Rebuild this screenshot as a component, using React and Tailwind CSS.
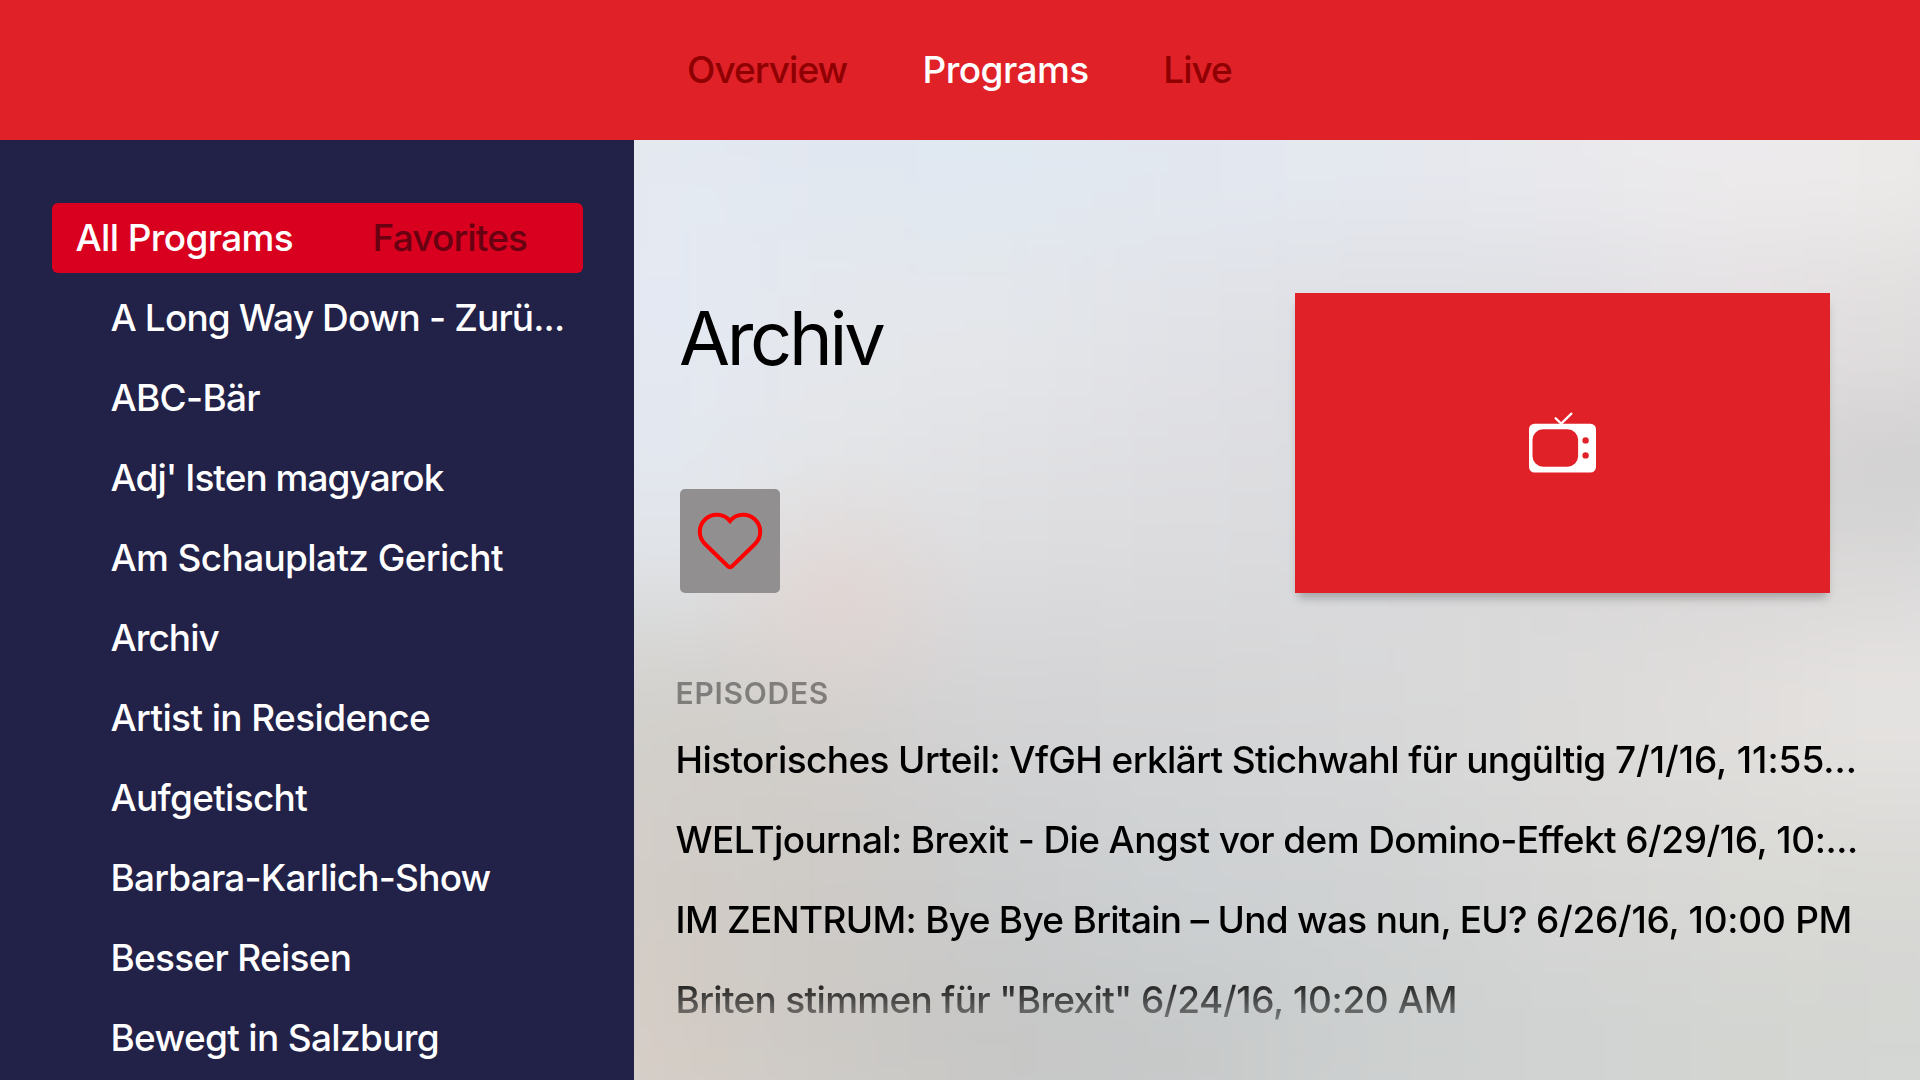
import React from "react";

const tabs = [
  { label: "Overview", cls: "text-[#8f0003] tracking-[-0.95px] w-[235.5px]" },
  { label: "Programs", cls: "text-white tracking-[-0.55px] w-[240.8px]" },
  { label: "Live", cls: "text-[#8f0003] tracking-[-1px]" },
];

const programs = [
  { name: "A Long Way Down - Zurü...", cls: "tracking-[-0.87px]" },
  { name: "ABC-Bär", cls: "tracking-[-0.72px]" },
  { name: "Adj' Isten magyarok", cls: "tracking-[-0.96px]" },
  { name: "Am Schauplatz Gericht", cls: "tracking-[-0.64px]" },
  { name: "Archiv", cls: "tracking-[-0.95px]" },
  { name: "Artist in Residence", cls: "tracking-[-0.62px]" },
  { name: "Aufgetischt", cls: "tracking-[-0.7px]" },
  { name: "Barbara-Karlich-Show", cls: "tracking-[-0.8px]" },
  { name: "Besser Reisen", cls: "tracking-[-0.72px]" },
  { name: "Bewegt in Salzburg", cls: "tracking-[-0.68px]" },
];

const episodes = [
  {
    title: "Historisches Urteil: VfGH erklärt Stichwahl für ungültig ",
    date: "7/1/16, 11:55...",
    titleCls: "tracking-[-0.61px]",
    dateCls: "tracking-[-0.03px]",
  },
  {
    title: "WELTjournal: Brexit - Die Angst vor dem Domino-Effekt ",
    date: "6/29/16, 10:...",
    titleCls: "tracking-[-0.62px]",
    dateCls: "tracking-[-0.43px]",
  },
  {
    title: "IM ZENTRUM: Bye Bye Britain – Und was nun, EU? ",
    date: "6/26/16, 10:00 PM",
    titleCls: "tracking-[-0.7px]",
    dateCls: "tracking-[-0.26px]",
  },
  {
    title: 'Briten stimmen für "Brexit" ',
    date: "6/24/16, 10:20 AM",
    titleCls: "tracking-[-0.67px]",
    dateCls: "tracking-[-0.36px]",
  },
];

const backdrop = [
  "#e6ebf3 #e1e8f2 #e0e9f3 #e3e9f2 #e6eaf2 #ebebf0 #efedee #f0eeec",
  "#e3e9f4 #e5e8ed #e5e7ea #e1e2e7 #dedfe3 #dedfe3 #e4e0e3 #dfdcdc",
  "#e4e9f0 #e2e3e4 #dfdfe2 #dddde0 #dadbde #d8d7d9 #d6d5d6 #d6d5d5",
  "#d1cfca #d3d0cd #d4d4d6 #d5d5d6 #d8d8d9 #dcdbda #e2dfdd #e9e6e4",
  "#d3ccc6 #cdcac6 #cbcccd #cdd1d3 #d0d2d3 #d6d6d5 #d9d9d6 #d8d8d4",
  "#d6ccc4 #cdcac5 #c5c5c4 #c5c7c7 #cbcfce #ced2d1 #d1d4d0 #d3d6d2",
]
  .join(" ")
  .split(" ");

function Backdrop() {
  return (
    <div className="absolute inset-0 overflow-hidden">
      <div className="absolute -inset-[91px] grid grid-cols-8 grid-rows-6 blur-[70px] [background:linear-gradient(#e6eaf1,#cdcfcd)] [box-shadow:0_0_0_120px_#dcdcdc]">
        {backdrop.map((color, i) => (
          <div key={i} style={{ backgroundColor: color }} />
        ))}
      </div>
      <div className="absolute inset-0 bg-[radial-gradient(ellipse_150px_140px_at_205px_455px,rgba(230,208,204,0.45),transparent),radial-gradient(ellipse_240px_100px_at_1270px_320px,rgba(206,205,205,0.5),transparent)]" />
    </div>
  );
}

function HeartIcon() {
  return (
    <svg width="66" height="60" viewBox="0 0 66 60" fill="none">
      <path
        d="M33 10.050A17 17 0 1 0 8 33L31.400 55.600Q33 56.800 34.600 55.600L58 33A17 17 0 1 0 33 10.050Z"
        stroke="#ff0000"
        strokeWidth="4"
        strokeLinejoin="miter"
      />
    </svg>
  );
}

function TvIcon() {
  return (
    <svg width="67" height="62" viewBox="0 0 67 62" className="mb-[2px]">
      <path
        d="M26.600 7.200L32.200 12.600L42.400 2.600"
        fill="none"
        stroke="#fff"
        strokeWidth="2.200"
        strokeLinecap="round"
      />
      <path
        fill="#fff"
        fillRule="evenodd"
        d="M5.500 12.700H61.500A5.500 5.500 0 0 1 67 18.200V56A5.500 5.500 0 0 1 61.500 61.500H5.500A5.500 5.500 0 0 1 0 56V18.200A5.500 5.500 0 0 1 5.500 12.700ZM14 18.300A10.500 10.500 0 0 0 3.500 28.800V45.200A10.500 10.500 0 0 0 14 55.700H38.600A10.500 10.500 0 0 0 49.100 45.200V28.800A10.500 10.500 0 0 0 38.600 18.300ZM56.600 26.200A3.200 3.200 0 1 0 56.600 32.600A3.200 3.200 0 1 0 56.600 26.200ZM56.600 41.200A3.200 3.200 0 1 0 56.600 47.600A3.200 3.200 0 1 0 56.600 41.200Z"
      />
    </svg>
  );
}

export default function App() {
  return (
    <div className="flex h-[1080px] w-[1920px] flex-col overflow-hidden whitespace-nowrap font-['Inter','Noto_Sans',sans-serif] text-[37px] font-medium">
      <nav className="flex h-[140px] shrink-0 items-center bg-[#e02128] pl-[687px]">
        {tabs.map((t) => (
          <a key={t.label} className={t.cls}>
            {t.label}
          </a>
        ))}
      </nav>
      <div className="flex min-h-0 flex-1">
        <aside className="w-[634px] shrink-0 overflow-hidden bg-[#222148] pt-[63px] text-white">
          <div className="mx-[52px] flex h-[70px] w-[531px] items-center rounded-md bg-[#d8001e] pl-[23.500px]">
            <span className="w-[297px] tracking-[-0.65px]">All Programs</span>
            <span className="tracking-[-0.85px] text-[#680011]">Favorites</span>
          </div>
          <ul className="mt-[5px] pl-[110.500px]">
            {programs.map((p) => (
              <li key={p.name} className="flex h-20 items-center">
                <span className={p.cls}>{p.name}</span>
              </li>
            ))}
          </ul>
        </aside>
        <main className="relative flex-1 overflow-hidden">
          <Backdrop />
          <div className="relative flex flex-col">
            <section className="flex h-[453px] items-end justify-between pr-[90px] pl-[46px]">
              <div className="flex h-[300px] flex-col justify-between">
                <h1 className="-ml-px h-[90px] text-[74px] leading-[90px] font-normal tracking-[-3.3px] text-black">
                  Archiv
                </h1>
                <button className="flex h-[104px] w-[100px] items-center justify-center rounded-[5px] bg-[#918f90]">
                  <HeartIcon />
                </button>
              </div>
              <div className="flex h-[300px] w-[535px] items-center justify-center bg-[#e02128] shadow-[0_8px_9px_-3px_rgba(0,0,0,0.25)]">
                <TvIcon />
              </div>
            </section>
            <section className="mt-[67px] h-[420px] mask-[linear-gradient(to_bottom,black_310px,transparent_393px)] pl-[41.500px] text-black">
              <h2 className="h-[60px] text-[30px] leading-[66px] font-semibold tracking-[0.73px] text-black/40">
                EPISODES
              </h2>
              <ul>
                {episodes.map((e) => (
                  <li key={e.date} className="h-20 leading-[80px] whitespace-pre">
                    <span className={e.titleCls}>{e.title}</span>
                    <span className={e.dateCls}>{e.date}</span>
                  </li>
                ))}
              </ul>
            </section>
          </div>
        </main>
      </div>
    </div>
  );
}
